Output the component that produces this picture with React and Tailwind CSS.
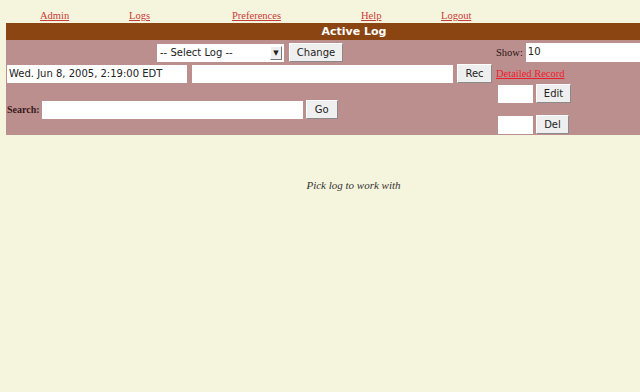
import React from 'react';

const serif = "font-['Liberation_Serif','DejaVu_Serif',serif]";
const sans = "font-['DejaVu_Sans','Liberation_Sans',sans-serif]";

function Btn({ children, className = '' }) {
    return (
        <button
            className={`${sans} text-[10px] text-[#222] bg-[#efefef] border border-t-white border-l-white border-b-[#8a8a8a] border-r-[#8a8a8a] h-[19px] px-[6px] leading-none ${className}`}
        >
            {children}
        </button>
    );
}

function Field({ className = '', value = '' }) {
    return (
        <div className={`${sans} bg-white h-[18px] text-[10px] text-[#222] leading-[18px] px-[2px] whitespace-nowrap overflow-hidden ${className}`}>
            {value}
        </div>
    );
}

export default function App() {
    const links = [
        ['Admin', 'w-[89px]'],
        ['Logs', 'w-[103px]'],
        ['Preferences', 'w-[129px]'],
        ['Help', 'w-[80px]'],
        ['Logout', 'w-[60px]'],
    ];

    return (
        <div className="w-[640px] h-[392px] overflow-hidden bg-[#f5f4dc]">
            <div className={`${serif} flex pl-[40px] pt-[8px] h-[23px] text-[10.5px]`}>
                {links.map(([name, w]) => (
                    <div key={name} className={w}>
                        <a href="#" className="text-[#c83a3a] underline">{name}</a>
                    </div>
                ))}
            </div>

            <div className="ml-[6px] w-[696px]">
                <div className={`${sans} h-[17px] bg-[#8b4513] text-white font-bold text-[11px] leading-[17px] text-center`}>
                    Active Log
                </div>
                <div className="bg-[#bc8f8f] h-[95px] flex">
                    <div className="w-[488px] shrink-0 flex flex-col">
                        <div className="flex justify-center items-center gap-[5px] pt-[2px] h-[23px]">
                            <div className={`${sans} w-[127px] h-[18px] bg-white text-[10px] text-[#222] leading-[18px] pl-[3px] flex justify-between`}>
                                <span>-- Select Log --</span>
                                <span className="w-[12px] h-[14px] mt-[2px] mr-[2px] bg-[#efefef] border border-t-white border-l-white border-b-[#777] border-r-[#777] text-[7px] leading-[12px] text-center">▼</span>
                            </div>
                            <Btn className="w-[54px]">Change</Btn>
                        </div>
                        <div className="flex items-center pl-[1px] h-[21px] gap-[5px]">
                            <Field className="w-[180px]" value="Wed. Jun 8, 2005, 2:19:00 EDT" />
                            <Field className="w-[261px]" />
                            <Btn className="w-[35px] -ml-[1px]">Rec</Btn>
                        </div>
                        <div className="flex-1 flex items-center pl-[1px]">
                            <span className={`${serif} text-[10px] font-bold text-[#3a1a1a] mr-[2px]`}>Search:</span>
                            <Field className="w-[261px]" />
                            <Btn className="w-[32px] ml-[3px]">Go</Btn>
                        </div>
                    </div>
                    <div className="flex flex-col">
                        <div className="flex items-center h-[23px] pt-[2px] pl-[2px]">
                            <span className={`${serif} text-[10.5px] text-[#2a1414] mr-[3px]`}>Show:</span>
                            <Field className="w-[200px] h-[19px]" value="10" />
                        </div>
                        <div className="h-[21px] flex items-center pl-[2px]">
                            <a href="#" className={`${serif} text-[10.5px] text-[#ee1c2c] underline`}>Detailed Record</a>
                        </div>
                        <div className="flex items-center gap-[3px] pl-[4px] h-[19px]">
                            <Field className="w-[35px]" />
                            <Btn className="w-[35px]">Edit</Btn>
                        </div>
                        <div className="flex items-center gap-[3px] pl-[4px] h-[19px] mt-[12px]">
                            <Field className="w-[35px]" />
                            <Btn className="w-[33px]">Del</Btn>
                        </div>
                    </div>
                </div>
            </div>

            <div className={`${serif} italic text-[11px] text-[#333] text-center mt-[42px]`}>
                <span className="ml-[67px]">Pick log to work with</span>
            </div>
        </div>
    );
}
